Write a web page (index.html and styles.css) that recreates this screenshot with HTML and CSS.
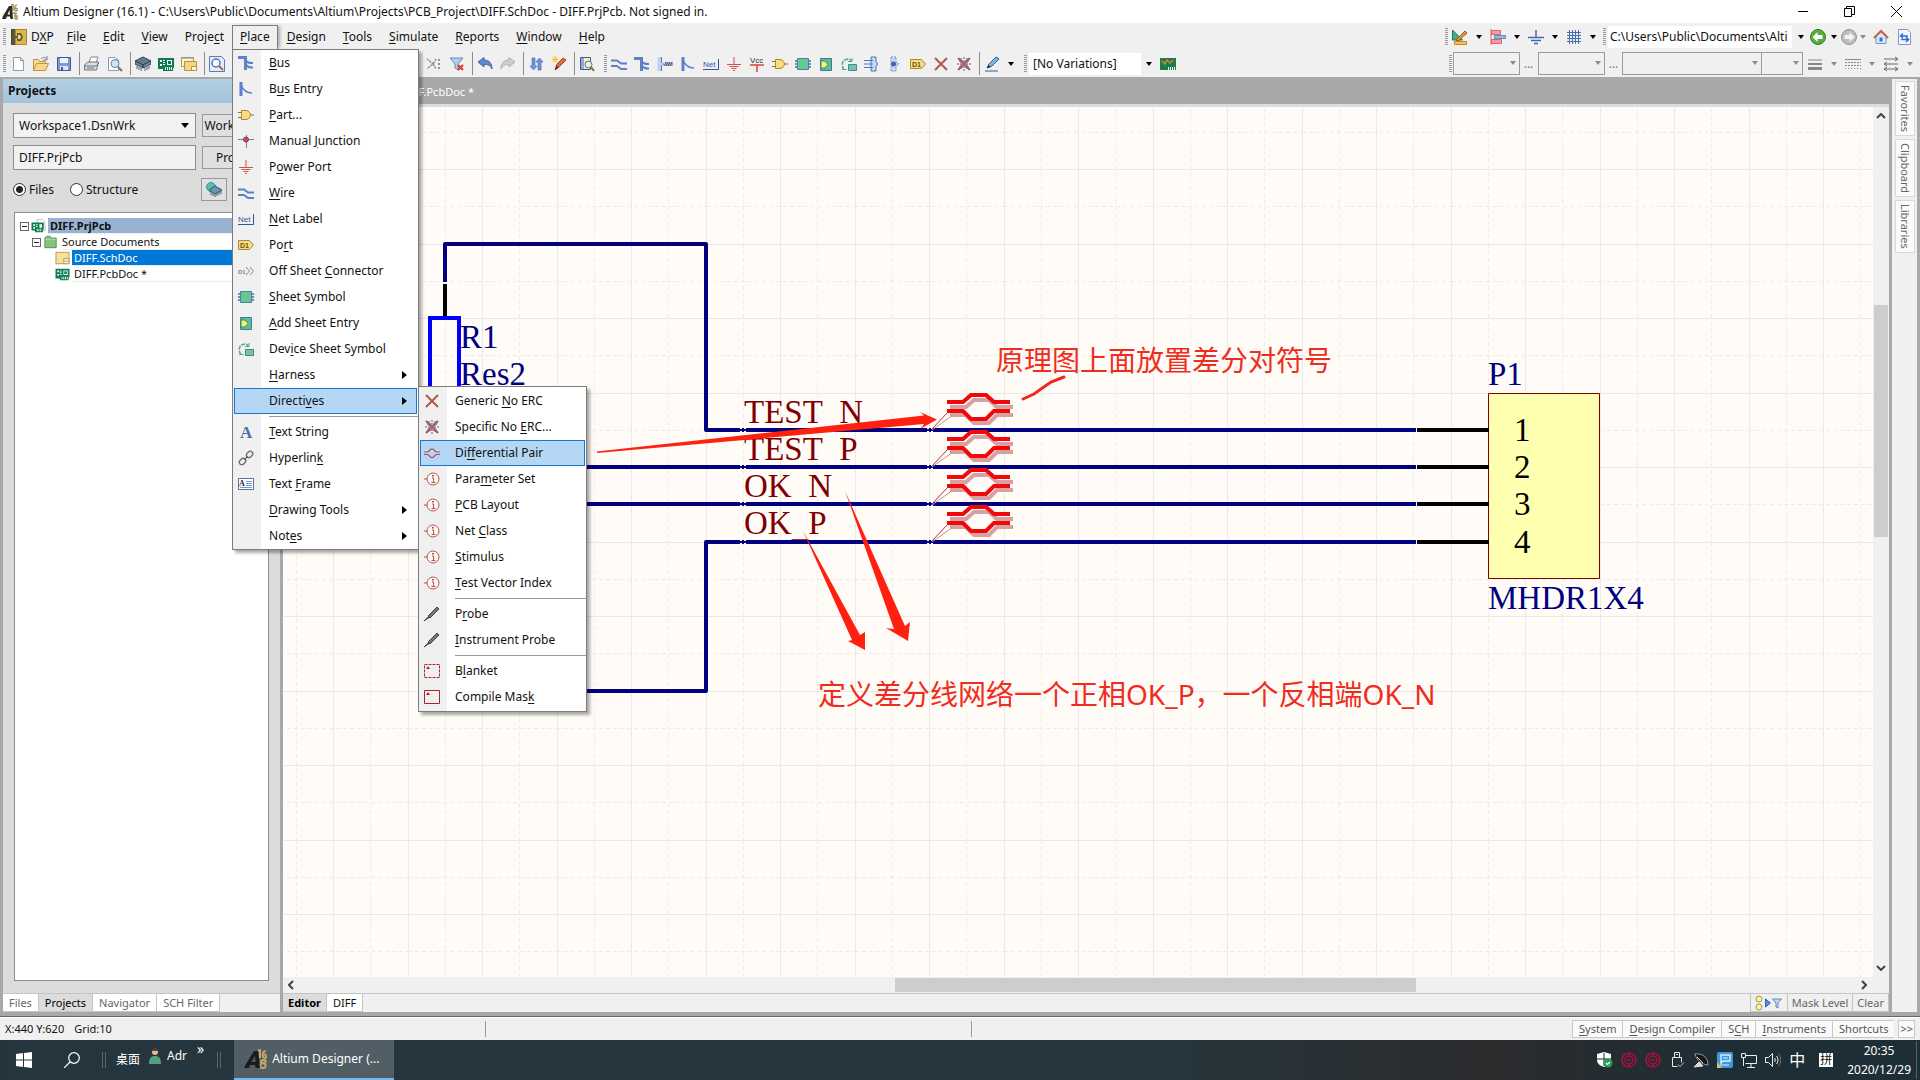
FILE: index.html
```html
<!DOCTYPE html>
<html lang="en">
<head>
<meta charset="utf-8">
<title>Altium Designer (16.1)</title>
<link rel="stylesheet" href="styles.css">
</head>
<body>

<!-- icon set -->
<svg class="defs" width="0" height="0">
	<symbol id="i-logo" viewBox="0 0 16 16"><path d="M9 1l2-1v7M15 1.500c-3-1.500-3 5.500-1 5.500s2-3-1-3M10 9h3v6M15 9.500c-3 0-2 3 0 2.500v3h-2" fill="none" stroke="#a8946a" stroke-width="1.500"/><path d="M0 15h4l.8-2.500H8L8.500 15H11L10 2H7L1 12zM7.500 6l.3 4.500H5.500z" fill="#2f2a28" fill-rule="evenodd"/></symbol>
	<symbol id="i-dxp" viewBox="0 0 16 16"><path d="M.5.5h4v15h-4z" fill="#5c5342" stroke="#4a4437"/><path d="M4.500 .5h11v15h-11z" fill="#d8b848" stroke="#a58a2f"/><path d="M6 4h4l2 4-2 4H6V9H2V7h4z" fill="#6a5a2c"/><path d="M7 6h2l1 2-1 2H7z" fill="#f0e09a"/></symbol>
	<symbol id="i-new" viewBox="0 0 16 16"><path d="M3.500 1.500h7l3 3v10h-10z" fill="#fff" stroke="#8a9bb5"/><path d="M10.500 1.500v3h3" fill="none" stroke="#8a9bb5"/></symbol>
	<symbol id="i-open" viewBox="0 0 16 16"><path d="M.5 14.500v-11h5l1 2h6v3" fill="#f7dc97" stroke="#c09348"/><path d="M.5 14.500l3-7h12l-3 7z" fill="#fbd58a" stroke="#c09348"/><path d="M8 3c2-2.500 4-2 5.500 0M14 0v4h-4" fill="none" stroke="#6d7f9c"/></symbol>
	<symbol id="i-save" viewBox="0 0 16 16"><path d="M1.500 1.500h13v13h-13z" fill="#8298d0" stroke="#43588f"/><path d="M4 2h8v5H4z" fill="#eef2fb"/><path d="M4 10h8v4H4z" fill="#dfe5f2"/><path d="M5 11h2v3H5z" fill="#43588f"/></symbol>
	<symbol id="i-print" viewBox="0 0 16 16"><path d="M5 6l2-5h7l-2 6z" fill="#fff" stroke="#7c8796"/><path d="M.5 9l3-3h11l-2 8h-12z" fill="#d8dde4" stroke="#6b7684"/><path d="M1 10h11M12 10l3-3M3 12h7" stroke="#6b7684" fill="none"/></symbol>
	<symbol id="i-preview" viewBox="0 0 16 16"><path d="M1.500 1.500h7l3 3v10h-10z" fill="#fff" stroke="#8a9bb5"/><circle cx="8" cy="7.500" r="4" fill="#cfe5f7" stroke="#6b7f99"/><path d="M11 11l4 4" stroke="#8c6b52" stroke-width="2"/></symbol>
	<symbol id="i-chip" viewBox="0 0 16 16"><path d="M8 1l8 4-8 4-8-4z" fill="#5f7c90" stroke="#33424e"/><path d="M0 5l8 4v3L0 8zM16 5l-8 4v3l8-4z" fill="#6e8da3" stroke="#33424e"/><path d="M2 10v3M4 11v3M6 12v3M10 12v3M12 11v3M14 10v3" stroke="#4c6070"/></symbol>
	<symbol id="i-globe" viewBox="0 0 16 16"><circle cx="5" cy="5" r="4.500" fill="#58bfa0" stroke="#3b8dc0"/><path d="M9 4l7 4-7 4-6-4z" fill="#6f94ad" stroke="#33566e"/><path d="M5 10v3M7 11v3M9 12v3M11 11v3M13 10v3M15 9v3" stroke="#3d5c72"/></symbol>
	<symbol id="i-pcb" viewBox="0 0 16 16"><path d="M0 2h16v10h-1v3H5v-2H0z" fill="#117a50"/><path d="M2 4h2v2H2zM2 8h2v2H2zM5 4h2v1H5zM5 6h2v1H5zM5 8h2v1H5zM9 4h5v5H9zM7 11h1v3H7zM9 11h1v3H9zM11 11h1v3h-1zM13 11h1v3h-1z" fill="#e8fff4"/><path d="M10 5h3v3h-3z" fill="#117a50"/></symbol>
	<symbol id="i-sch" viewBox="0 0 16 16"><path d="M.5 1.500h12v9H.5z" fill="#fff3c9" stroke="#b59443"/><path d="M3.500 5.500h12v9h-12z" fill="#f6d57c" stroke="#b59443"/><path d="M10.500 10.500h5v4h-5z" fill="#fff7dc" stroke="#b59443"/><path d="M.5 2h12" stroke="#7f8fb5"/></symbol>
	<symbol id="i-schdoc" viewBox="0 0 16 16"><path d="M.5 1.500h15v13H.5z" fill="#f8e0a0" stroke="#b59443"/><path d="M9.500 8.500h6v6h-6z" fill="#fff7dc" stroke="#b59443"/><path d="M10 11.500h5" stroke="#b59443"/></symbol>
	<symbol id="i-prj" viewBox="0 0 16 16"><path d="M6.500.5h6l3 3v10h-9z" fill="#fff" stroke="#a9b9c9"/><path d="M0 4h14v8h-1v3H4v-2H0z" fill="#117a50"/><path d="M2 6h2v2H2zM2 9h2v2H2zM5 6h2v1H5zM5 8h2v1H5zM9 6h3v4H9zM6 11h1v3H6zM8 11h1v3H8zM10 11h1v3h-1z" fill="#e8fff4"/></symbol>
	<symbol id="i-zoomdoc" viewBox="0 0 16 16"><path d="M.5.5h12l3 3v12H.5z" fill="#e4ecf8" stroke="#5a7bb8"/><circle cx="7" cy="7" r="4" fill="#fff" stroke="#4f76bd" stroke-width="1.500"/><path d="M10 10l4 4" stroke="#9a6b46" stroke-width="2"/></symbol>
	<symbol id="i-cross" viewBox="0 0 16 16"><path d="M1 3l6 5-6 5M10 3l-3 5 3 5" fill="none" stroke="#8b9070" stroke-dasharray="2 1" stroke-width="1.500"/><path d="M12 3h2v2h-2zM12 7h2v2h-2zM12 11h2v2h-2z" fill="#8592a8"/></symbol>
	<symbol id="i-filter" viewBox="0 0 16 16"><path d="M1 2h13l-5 6v6l-3-2V8z" fill="#b6cdf0" stroke="#6b86b8"/><path d="M9 9l5 5M14 9l-5 5" stroke="#d83a2c" stroke-width="2"/></symbol>
	<symbol id="i-undo" viewBox="0 0 16 16"><path d="M1 6l6-4.500V4c5 0 8 3 8 9-2-4-4-4.500-8-4.500V11z" fill="#5f87cf" stroke="#4266a8"/></symbol>
	<symbol id="i-redo" viewBox="0 0 16 16"><path d="M15 6L9 1.500V4C4 4 1 7 1 13c2-4 4-4.500 8-4.500V11z" fill="#c9ccd0" stroke="#aeb2b6"/></symbol>
	<symbol id="i-updown" viewBox="0 0 16 16"><path d="M4 2h3v8h2l-3.500 4L2 10h2zM10 14V6H8l3.500-4L15 6h-2v8z" fill="#6c94e0" stroke="#3d62ab" stroke-width=".6"/></symbol>
	<symbol id="i-pencil" viewBox="0 0 16 16"><path d="M4 14l2-6 6-6 3 2-7 7z" fill="#e0674a" stroke="#a2422c"/><path d="M4 14l1.500-4 2 1.500z" fill="#333"/><path d="M4 0v7M.5 3.500h7M1.500 1l5 5M6.500 1l-5 5" stroke="#f2c325"/></symbol>
	<symbol id="i-find" viewBox="0 0 16 16"><path d="M1.500 1.500h10v12h-10z" fill="#8eabdc" stroke="#43588f"/><path d="M5 2h6v11H5z" fill="#f4eecd"/><circle cx="9.500" cy="8.500" r="3.500" fill="#e2f0fb" stroke="#7c6b4a"/><path d="M12 11l3 4" stroke="#8c6b32" stroke-width="2"/></symbol>
	<symbol id="i-bus" viewBox="0 0 16 16"><path d="M0 2.500h7.500V15" fill="none" stroke="#5b82c9" stroke-width="3"/><path d="M7 4c2 4 4 4 8 4M7 8c2 4 4 4.500 8 4.500" fill="none" stroke="#5b82c9" stroke-width="2"/></symbol>
	<symbol id="i-entry" viewBox="0 0 16 16"><path d="M3 1v14" stroke="#5b82c9" stroke-width="3"/><path d="M3 4c2 5 5 8 11 8" fill="none" stroke="#5b82c9" stroke-width="1.500"/></symbol>
	<symbol id="i-wire" viewBox="0 0 16 16"><path d="M0 4.500h6l4 3h6M0 10h6l4 3h6" fill="none" stroke="#5b82c9" stroke-width="2"/></symbol>
	<symbol id="i-harness" viewBox="0 0 16 16"><path d="M2.500 1v14" stroke="#bcd2f4" stroke-width="4"/><path d="M4.500 1v5l2 2-2 2v5" fill="none" stroke="#4f76bd"/><path d="M7 10l2-4v4l2-4v4l2-4v4l2-4v4" fill="none" stroke="#4b5f90"/></symbol>
	<symbol id="i-net" viewBox="0 0 16 16"><text x="0" y="11" font-size="8" fill="#31549c">Net</text><path d="M0 13.500h15.500V3" fill="none" stroke="#31549c"/></symbol>
	<symbol id="i-power" viewBox="0 0 16 16"><path d="M8 1v8M1 8.500h14M3.500 10.500h9M5.500 12.500h5M7 14.500h2" fill="none" stroke="#d0504a"/></symbol>
	<symbol id="i-vcc" viewBox="0 0 16 16"><text x="1" y="7" font-size="8" fill="#333">Vcc</text><path d="M1 9h14M8 9v7" stroke="#d9413d" stroke-width="1.500"/></symbol>
	<symbol id="i-part" viewBox="0 0 16 16"><path d="M0 5.500h4M0 10.500h4M12 8h4" stroke="#8a7440"/><path d="M3.500 3.500H8c3 0 4.500 3 4.500 4.500S11 12.500 8 12.500H3.500z" fill="#f8dc7d" stroke="#a8893a"/></symbol>
	<symbol id="i-sheet" viewBox="0 0 16 16"><path d="M0 5h16M0 8h16M0 11h16" stroke="#6f8cc0" stroke-width="2"/><path d="M2.500 2.500h11v11h-11z" fill="#67c793" stroke="#4a7fb0"/></symbol>
	<symbol id="i-addentry" viewBox="0 0 16 16"><path d="M2.500 2.500h11v12h-11z" fill="#5bbf86" stroke="#3f78a5"/><path d="M3 5h4l3 3.500L7 12H3z" fill="#fbf07a" stroke="#3f8a68"/></symbol>
	<symbol id="i-device" viewBox="0 0 16 16"><path d="M3 13.500c-3-4-2-9 2-10 3-1 5 0 5 2" fill="none" stroke="#5aa878" stroke-width="1.500" stroke-dasharray="4 1"/><path d="M7 5.500h4V2" fill="none" stroke="#5aa878"/><path d="M7.500 8.500h8v6h-8z" fill="#6ecb95" stroke="#4a7fb0"/><path d="M1 13.500h4.500" fill="none" stroke="#5aa878"/></symbol>
	<symbol id="i-hconn" viewBox="0 0 16 16"><path d="M7 1h5v5l2 2-2 2v5H7z" fill="#c6daf8" stroke="#4f76bd"/><path d="M0 4.500h9M0 8h9M0 11.500h9" stroke="#4f76bd"/></symbol>
	<symbol id="i-hentry" viewBox="0 0 16 16"><path d="M4 1h5v5l3 2-3 2v5H4z" fill="#c6daf8" stroke="#6d8fce" stroke-dasharray="2 1"/><circle cx="6.500" cy="8" r="2.500" fill="#3c64b4"/></symbol>
	<symbol id="i-port" viewBox="0 0 16 16"><path d="M.5 3.500h11l4 4.500-4 4.500H.5z" fill="#f8dc7d" stroke="#a8893a"/><text x="2" y="11" font-size="7" font-weight="bold" fill="#6a5320">D1</text></symbol>
	<symbol id="i-off" viewBox="0 0 16 16"><text x="0" y="11" font-size="6" font-weight="bold" fill="#6f86b8">D1</text><path d="M8 4l3.500 4L8 12M12 4l3.500 4-3.500 4" fill="none" stroke="#a87f7a"/></symbol>
	<symbol id="i-junction" viewBox="0 0 16 16"><path d="M0 6.500h16M8.500 2v13" stroke="#5b82c9"/><circle cx="8" cy="6.500" r="2.500" fill="#d05050" stroke="#9c3434"/></symbol>
	<symbol id="i-noerc" viewBox="0 0 16 16"><path d="M2 2l12 12M14 2L2 14" stroke="#b5554b" stroke-width="2"/></symbol>
	<symbol id="i-spec" viewBox="0 0 16 16"><path d="M8 1v14M1 8h14M3 5h10M3 11h10M5 2v12M11 2v12" stroke="#8190cc" stroke-width="1.500" stroke-dasharray="2 1"/><path d="M2 2l12 12M14 2L2 14" stroke="#b5554b" stroke-width="2"/></symbol>
	<symbol id="i-pen" viewBox="0 0 16 16"><path d="M3 12l2-4 7-7 3 2-7 7z" fill="#7fb8e0" stroke="#2d5f8c"/><path d="M3 12l1.500-3 2 2z" fill="#222"/><path d="M1 15h13" stroke="#2d5f8c"/></symbol>
	<symbol id="i-board" viewBox="0 0 16 16"><path d="M0 2h16v12H0z" fill="#1f7a4c"/><path d="M2 5l3 3 2-4 3 3 3-3" fill="none" stroke="#d0843c" stroke-width="1.500"/><path d="M8 11h1v3H8zM10 11h1v3h-1zM12 11h1v3h-1zM14 11h1v3h-1z" fill="#e8fff4"/></symbol>
	<symbol id="i-text" viewBox="0 0 16 16"><text class="serif" x="2" y="14" font-size="17" font-weight="bold" fill="#4f6cb5">A</text></symbol>
	<symbol id="i-link" viewBox="0 0 16 16"><g fill="none" stroke="#6a6a6a" stroke-width="1.300"><rect x="8" y="2" width="7" height="5" rx="2.500" transform="rotate(-45 11.500 4.500)"/><rect x="1" y="9" width="7" height="5" rx="2.500" transform="rotate(-45 4.500 11.500)"/><path d="M6 10l4-4"/></g></symbol>
	<symbol id="i-frame" viewBox="0 0 16 16"><path d="M.5 2.500h15v11H.5z" fill="#fff" stroke="#5a6f9c"/><text class="serif" x="1" y="10" font-size="8" font-weight="bold" fill="#223">A</text><path d="M8 5.500h6M8 7.500h6M8 9.500h6M2 11.500h12" stroke="#7f9ad0"/></symbol>
	<symbol id="i-diff" viewBox="0 0 16 16"><path d="M0 7h4l3-3h2l3 3h4M0 9.500h4l3 3h2l3-3h4" fill="none" stroke="#b5455b" stroke-width="1.200"/></symbol>
	<symbol id="i-info" viewBox="0 0 16 16"><circle cx="9" cy="8" r="6" fill="#fff6f4" stroke="#b5554b"/><path d="M0 8h3M8 7h1.500v4M7.500 11.500h4" fill="none" stroke="#b5554b"/><path d="M8 4h2v1.500H8z" fill="#b5554b"/></symbol>
	<symbol id="i-probe" viewBox="0 0 16 16"><path d="M0 15l5-5 1 1z" stroke="#555"/><path d="M4 10l9-9 2 2-9 9z" fill="#777" stroke="#444"/></symbol>
	<symbol id="i-blanket" viewBox="0 0 16 16"><path d="M.5 1.500h15v13H.5z" fill="none" stroke="#a8262c" stroke-dasharray="3 1"/><path d="M2 6l2-3 2 3z" fill="#a8262c"/></symbol>
	<symbol id="i-mask" viewBox="0 0 16 16"><path d="M.5 1.500h15v13H.5z" fill="none" stroke="#a8262c"/><path d="M2 6l2-3 2 3z" fill="#a8262c"/></symbol>
	<symbol id="i-folder" viewBox="0 0 16 16"><path d="M1.500 14.500v-11l2-2h4l1 2h6v11z" fill="#86c37d" stroke="#4c8b4a"/><path d="M2 5h12" stroke="#b5dfae"/></symbol>
	<symbol id="i-ruler" viewBox="0 0 16 16"><path d="M.5 1v10h10z" fill="#3fae86" stroke="#1f7a5c"/><path d="M4 11l9-9 2 2-9 8z" fill="#e89b3a" stroke="#8f5a1c"/><path d="M2.500 12.500h12v3h-12z" fill="#f8c050" stroke="#c98a26"/></symbol>
	<symbol id="i-align" viewBox="0 0 16 16"><path d="M1.500 1.500h9v4h-9zM1.500 10.500h10v4h-10z" fill="#f59aa0" stroke="#d7666f"/><path d="M4.500 6.500h11v3h-11z" fill="#8fbdf0" stroke="#5b8dcb"/><path d="M1 0v16" stroke="#d7666f"/></symbol>
	<symbol id="i-gnd" viewBox="0 0 16 16"><path d="M8 1v8M0 8.500h16M3 11.500h10M6 14.500h4" fill="none" stroke="#3f6da8" stroke-width="1.500"/></symbol>
	<symbol id="i-grid" viewBox="0 0 16 16"><path d="M3.500 1v14M6.500 1v14M9.500 1v14M12.500 1v14M1 3.500h14M1 6.500h14M1 9.500h14M1 12.500h14" stroke="#4a6fae"/></symbol>
	<symbol id="i-back" viewBox="0 0 16 16"><circle cx="8" cy="8" r="7.500" fill="#58ad3c" stroke="#347d22"/><path d="M2.500 8l5-5v3h5v4h-5v3z" fill="#fff"/></symbol>
	<symbol id="i-fwd" viewBox="0 0 16 16"><circle cx="8" cy="8" r="7.500" fill="#bdbdbd" stroke="#929292"/><path d="M13.500 8l-5-5v3h-5v4h5v3z" fill="#f4f4f4"/></symbol>
	<symbol id="i-home" viewBox="0 0 16 16"><path d="M3 7l5-5 5 5v7.500H3z" fill="#d9e9fb" stroke="#6f94c8"/><path d="M1 9l7-7 7 7" fill="none" stroke="#c5633b" stroke-width="2"/><path d="M6.500 8.500h3v4h-3z" fill="#2f6fe0"/></symbol>
	<symbol id="i-refresh" viewBox="0 0 16 16"><path d="M2.500.5h9l3 3v12h-12z" fill="#f4f8fe" stroke="#7d98c8"/><path d="M12 7H5M7 4.500L4.500 7 7 9M5 10.500h7M10 8l2.500 2.500L10 13" fill="none" stroke="#2b6fd0" stroke-width="1.500"/></symbol>
	<symbol id="i-lines" viewBox="0 0 16 16"><path d="M1 4h14" stroke="#888"/><path d="M1 8h14" stroke="#888" stroke-width="2"/><path d="M1 12.500h14" stroke="#888" stroke-width="3"/></symbol>
	<symbol id="i-dashes" viewBox="0 0 16 16"><path d="M0 3.500h16" stroke="#888"/><path d="M0 6.500h16M0 9.500h16" stroke="#888" stroke-dasharray="2 1"/><path d="M0 12.500h16" stroke="#888" stroke-dasharray="1 2"/></symbol>
	<symbol id="i-arrows" viewBox="0 0 16 16"><path d="M1 3h13M2 8h13M1 13h14M12 1l3 2-3 2M4 6L1 8l3 2M12 11l3 2-3 2M4 11l-3 2 3 2" fill="none" stroke="#666"/></symbol>
	<symbol id="i-maskset" viewBox="0 0 28 16"><circle cx="4" cy="4" r="3" fill="#fdf6a0" stroke="#a09a3c"/><circle cx="4" cy="12" r="3" fill="#fdf6a0" stroke="#a09a3c"/><path d="M10.500 4v8l5-4z" fill="#5b8de0" stroke="#2f5fb5"/><path d="M17.500 4h9l-3.500 4v5l-2-1V8z" fill="#c4d5f2" stroke="#6b86b8"/></symbol>
	<symbol id="i-win" viewBox="0 0 16 16"><path d="M0 2l7-1v6.500H0zM8 1l8-1v7.500H8zM0 8.500h7V15l-7-1zM8 8.500h8V16l-8-1z" fill="#fff"/></symbol>
	<symbol id="i-search" viewBox="0 0 16 16"><circle cx="10" cy="6" r="5.300" fill="none" stroke="#fff" stroke-width="1.200"/><path d="M6 10l-6 6" stroke="#fff" stroke-width="1.200"/></symbol>
	<symbol id="i-person" viewBox="0 0 16 16"><circle cx="8" cy="4" r="3" fill="#e3bb94"/><path d="M5 3c0-4 6-4 6 0z" fill="#5b4030"/><path d="M2 16c0-6 2-8 6-8s6 2 6 8z" fill="#4fa27c"/></symbol>
	<symbol id="i-tasklogo" viewBox="0 0 24 20"><path d="M14 2l2-1v8M22 2.500c-4-2-4 6.500-1.500 6.500s2-4-1.500-4M20 11c-4 0-4 3-1 3s4 5 0 5-4-4 0-5 3-3 1-3" fill="none" stroke="#c0a468" stroke-width="2"/><path d="M0 19h5l1-3h5l.5 3H16L14 2h-4L2 15zM11 7l.5 6H7.500z" fill="#1d1b1a" fill-rule="evenodd"/></symbol>
	<symbol id="i-shield" viewBox="0 0 16 16"><path d="M7 0l7 2v6c0 4-4 6-7 7-3-1-7-3-7-7V2z" fill="#fff"/><path d="M7 1v13M0 7h14" stroke="#1f2d34"/><circle cx="11" cy="11" r="4.500" fill="#21a052"/><path d="M9 11l1.500 1.500L13 10" fill="none" stroke="#fff" stroke-width="1.200"/></symbol>
	<symbol id="i-red" viewBox="0 0 16 16"><circle cx="8" cy="8" r="7" fill="none" stroke="#a80f3a" stroke-width="1.600"/><circle cx="8" cy="8" r="4" fill="none" stroke="#a80f3a" stroke-width="1.500"/><path d="M6 8h4M8 1v3M8 12v3" stroke="#a80f3a" stroke-width="1.500"/></symbol>
	<symbol id="i-usb" viewBox="0 0 16 16"><path d="M5.500 5V.5h5V5M3.500 5.500h9v5M3.500 5.500v9h5" fill="none" stroke="#e8e8e8"/><path d="M7 2.500h2" stroke="#e8e8e8"/><path d="M9 12.500l2 2 4-4" fill="none" stroke="#c0c4c8"/></symbol>
	<symbol id="i-dish" viewBox="0 0 16 16"><path d="M2 2c2 7 6 10 13 11C15 5 9 1 2 2z" fill="#161616" stroke="#ccc" stroke-width=".7"/><path d="M4 5l6 6M1 15l5-5 4 4z" fill="#ddd" stroke="#ddd"/></symbol>
	<symbol id="i-blue" viewBox="0 0 16 16"><rect width="16" height="16" rx="2" fill="#3f97dc"/><path d="M4 3h9v6H6l-2 2z" fill="none" stroke="#d8f0ff" stroke-width="1.400"/><path d="M6 6h5M3 13h9" stroke="#d8f0ff"/><path d="M0 10v6h5z" fill="#e8c05c"/></symbol>
	<symbol id="i-monitor" viewBox="0 0 16 16"><path d="M4.500 3.500h11v8h-11M10 12v3M6 15.500h8M.5 1.500h4v4h-4zM2.500 6v8" fill="none" stroke="#eee"/></symbol>
	<symbol id="i-speaker" viewBox="0 0 16 16"><path d="M.5 5.500h3l4-4v13l-4-4h-3z" fill="none" stroke="#eee"/><path d="M9.500 6c1 1 1 3 0 4M11.500 4c2 2 2 6 0 8" fill="none" stroke="#eee"/><path d="M13.500 2c3 3 3 9 0 12" fill="none" stroke="#777"/></symbol>
</svg>

<header class="titlebar">
	<svg class="icon"><use href="#i-logo"/></svg>
	<span class="caption">Altium Designer (16.1) - C:\Users\Public\Documents\Altium\Projects\PCB_Project\DIFF.SchDoc - DIFF.PrjPcb. Not signed in.</span>
	<button class="winbtn" aria-label="Minimize"><svg width="11" height="11"><path d="M0 5.500h10" stroke="#000"/></svg></button>
	<button class="winbtn" aria-label="Restore"><svg width="11" height="11"><path d="M.5 2.500h7v8h-7zM2.500 2V.5h8v8H8" fill="none" stroke="#000"/></svg></button>
	<button class="winbtn" aria-label="Close"><svg width="11" height="11"><path d="M0 0l11 11M11 0L0 11" stroke="#000"/></svg></button>
</header>

<nav class="menubar">
	<span class="grip"></span>
	<button class="menu dxp"><svg class="icon"><use href="#i-dxp"/></svg><span>D<u>X</u>P</span></button>
	<button class="menu"><u>F</u>ile</button>
	<button class="menu"><u>E</u>dit</button>
	<button class="menu"><u>V</u>iew</button>
	<button class="menu">Proje<u>c</u>t</button>
	<div class="menu-wrap">
		<button class="menu open"><u>P</u>lace</button>
		<div class="dropdown place">
			<button class="item"><svg class="icon"><use href="#i-bus"/></svg><span><u>B</u>us</span></button>
			<button class="item"><svg class="icon"><use href="#i-entry"/></svg><span>B<u>u</u>s Entry</span></button>
			<button class="item"><svg class="icon"><use href="#i-part"/></svg><span><u>P</u>art...</span></button>
			<button class="item"><svg class="icon"><use href="#i-junction"/></svg><span>Manual <u>J</u>unction</span></button>
			<button class="item"><svg class="icon"><use href="#i-power"/></svg><span>P<u>o</u>wer Port</span></button>
			<button class="item"><svg class="icon"><use href="#i-wire"/></svg><span><u>W</u>ire</span></button>
			<button class="item"><svg class="icon"><use href="#i-net"/></svg><span><u>N</u>et Label</span></button>
			<button class="item"><svg class="icon"><use href="#i-port"/></svg><span>Po<u>r</u>t</span></button>
			<button class="item"><svg class="icon"><use href="#i-off"/></svg><span>Off Sheet <u>C</u>onnector</span></button>
			<button class="item"><svg class="icon"><use href="#i-sheet"/></svg><span><u>S</u>heet Symbol</span></button>
			<button class="item"><svg class="icon"><use href="#i-addentry"/></svg><span><u>A</u>dd Sheet Entry</span></button>
			<button class="item"><svg class="icon"><use href="#i-device"/></svg><span>Dev<u>i</u>ce Sheet Symbol</span></button>
			<button class="item more"><span class="icon"></span><span><u>H</u>arness</span></button>
			<div class="sub-wrap">
				<button class="item more active"><span class="icon"></span><span>Directi<u>v</u>es</span></button>
				<div class="dropdown sub">
					<button class="item"><svg class="icon"><use href="#i-noerc"/></svg><span>Generic <u>N</u>o ERC</span></button>
					<button class="item"><svg class="icon"><use href="#i-spec"/></svg><span>Specific No <u>E</u>RC...</span></button>
					<button class="item active"><svg class="icon"><use href="#i-diff"/></svg><span>Di<u>f</u>ferential Pair</span></button>
					<button class="item"><svg class="icon"><use href="#i-info"/></svg><span>Para<u>m</u>eter Set</span></button>
					<button class="item"><svg class="icon"><use href="#i-info"/></svg><span><u>P</u>CB Layout</span></button>
					<button class="item"><svg class="icon"><use href="#i-info"/></svg><span>Net <u>C</u>lass</span></button>
					<button class="item"><svg class="icon"><use href="#i-info"/></svg><span><u>S</u>timulus</span></button>
					<button class="item"><svg class="icon"><use href="#i-info"/></svg><span><u>T</u>est Vector Index</span></button>
					<hr>
					<button class="item"><svg class="icon"><use href="#i-probe"/></svg><span>P<u>r</u>obe</span></button>
					<button class="item"><svg class="icon"><use href="#i-probe"/></svg><span><u>I</u>nstrument Probe</span></button>
					<hr>
					<button class="item"><svg class="icon"><use href="#i-blanket"/></svg><span>B<u>l</u>anket</span></button>
					<button class="item"><svg class="icon"><use href="#i-mask"/></svg><span>Compile Mas<u>k</u></span></button>
				</div>
			</div>
			<hr>
			<button class="item"><svg class="icon"><use href="#i-text"/></svg><span><u>T</u>ext String</span></button>
			<button class="item"><svg class="icon"><use href="#i-link"/></svg><span>Hyperlin<u>k</u></span></button>
			<button class="item"><svg class="icon"><use href="#i-frame"/></svg><span>Text <u>F</u>rame</span></button>
			<button class="item more"><span class="icon"></span><span><u>D</u>rawing Tools</span></button>
			<button class="item more"><span class="icon"></span><span>Not<u>e</u>s</span></button>
		</div>
	</div>
	<button class="menu"><u>D</u>esign</button>
	<button class="menu"><u>T</u>ools</button>
	<button class="menu"><u>S</u>imulate</button>
	<button class="menu"><u>R</u>eports</button>
	<button class="menu"><u>W</u>indow</button>
	<button class="menu"><u>H</u>elp</button>
	<div class="right">
		<span class="grip"></span>
		<button class="tool" aria-label="Utilities"><svg class="icon"><use href="#i-ruler"/></svg></button><button class="arr" aria-label="More"></button>
		<button class="tool" aria-label="Align"><svg class="icon"><use href="#i-align"/></svg></button><button class="arr" aria-label="More"></button>
		<button class="tool" aria-label="Power"><svg class="icon"><use href="#i-gnd"/></svg></button><button class="arr" aria-label="More"></button>
		<button class="tool" aria-label="Grid"><svg class="icon"><use href="#i-grid"/></svg></button><button class="arr" aria-label="More"></button>
		<span class="grip"></span>
		<input class="path" aria-label="Path" value="C:\Users\Public\Documents\Alti"><button class="arr" aria-label="More"></button>
		<button class="nav" aria-label="Back"><svg class="icon"><use href="#i-back"/></svg></button><button class="arr" aria-label="More"></button>
		<button class="nav" aria-label="Forward"><svg class="icon"><use href="#i-fwd"/></svg></button><button class="arr off" aria-label="More"></button>
		<button class="tool" aria-label="Home"><svg class="icon"><use href="#i-home"/></svg></button>
		<button class="tool" aria-label="Refresh"><svg class="icon"><use href="#i-refresh"/></svg></button>
	</div>
</nav>

<div class="toolbar">
	<span class="grip"></span>
	<button class="tool" aria-label="New"><svg class="icon"><use href="#i-new"/></svg></button>
	<button class="tool" aria-label="Open"><svg class="icon"><use href="#i-open"/></svg></button>
	<button class="tool" aria-label="Save"><svg class="icon"><use href="#i-save"/></svg></button>
	<span class="sep"></span>
	<button class="tool" aria-label="Print"><svg class="icon"><use href="#i-print"/></svg></button>
	<button class="tool" aria-label="Preview"><svg class="icon"><use href="#i-preview"/></svg></button>
	<span class="sep"></span>
	<button class="tool" aria-label="Devices"><svg class="icon"><use href="#i-chip"/></svg></button>
	<button class="tool" aria-label="PCB"><svg class="icon"><use href="#i-pcb"/></svg></button>
	<button class="tool" aria-label="Schematic"><svg class="icon"><use href="#i-sch"/></svg></button>
	<span class="sep"></span>
	<button class="tool" aria-label="Zoom"><svg class="icon"><use href="#i-zoomdoc"/></svg></button>
	<div class="group-edit">
		<button class="tool" aria-label="Deselect"><svg class="icon"><use href="#i-cross"/></svg></button>
		<button class="tool" aria-label="Clear filter"><svg class="icon"><use href="#i-filter"/></svg></button>
		<span class="sep"></span>
		<button class="tool" aria-label="Undo"><svg class="icon"><use href="#i-undo"/></svg></button>
		<button class="tool" aria-label="Redo"><svg class="icon"><use href="#i-redo"/></svg></button>
		<span class="sep"></span>
		<button class="tool" aria-label="Hierarchy"><svg class="icon"><use href="#i-updown"/></svg></button>
		<button class="tool" aria-label="Cross probe"><svg class="icon"><use href="#i-pencil"/></svg></button>
		<span class="sep"></span>
		<button class="tool" aria-label="Browse"><svg class="icon"><use href="#i-find"/></svg></button>
	</div>
	<span class="grip wide"></span>
	<button class="tool" aria-label="Wire"><svg class="icon"><use href="#i-wire"/></svg></button>
	<button class="tool" aria-label="Bus"><svg class="icon"><use href="#i-bus"/></svg></button>
	<button class="tool" aria-label="Harness"><svg class="icon"><use href="#i-harness"/></svg></button>
	<button class="tool" aria-label="Bus entry"><svg class="icon"><use href="#i-entry"/></svg></button>
	<button class="tool" aria-label="Net label"><svg class="icon"><use href="#i-net"/></svg></button>
	<button class="tool" aria-label="GND"><svg class="icon"><use href="#i-power"/></svg></button>
	<button class="tool" aria-label="VCC"><svg class="icon"><use href="#i-vcc"/></svg></button>
	<button class="tool" aria-label="Part"><svg class="icon"><use href="#i-part"/></svg></button>
	<button class="tool" aria-label="Sheet symbol"><svg class="icon"><use href="#i-sheet"/></svg></button>
	<button class="tool" aria-label="Sheet entry"><svg class="icon"><use href="#i-addentry"/></svg></button>
	<button class="tool" aria-label="Device sheet"><svg class="icon"><use href="#i-device"/></svg></button>
	<button class="tool" aria-label="Harness connector"><svg class="icon"><use href="#i-hconn"/></svg></button>
	<button class="tool" aria-label="Harness entry"><svg class="icon"><use href="#i-hentry"/></svg></button>
	<button class="tool" aria-label="Port"><svg class="icon"><use href="#i-port"/></svg></button>
	<button class="tool" aria-label="No ERC"><svg class="icon"><use href="#i-noerc"/></svg></button>
	<button class="tool" aria-label="Specific no ERC"><svg class="icon"><use href="#i-spec"/></svg></button>
	<span class="sep"></span>
	<button class="tool" aria-label="Highlight"><svg class="icon"><use href="#i-pen"/></svg></button><button class="arr" aria-label="More"></button>
	<span class="grip wide"></span>
	<input class="variation" aria-label="Variation" value="[No Variations]"><button class="arr" aria-label="More"></button>
	<button class="tool" aria-label="Variants"><svg class="icon"><use href="#i-board"/></svg></button>
	<div class="right format">
		<span class="grip"></span>
		<div class="combo short"><select disabled aria-label="Colour"></select></div><span class="dots">...</span>
		<div class="combo short"><select disabled aria-label="Fill"></select></div><span class="dots">...</span>
		<div class="combo long"><select disabled aria-label="Font"></select></div>
		<div class="combo size"><select disabled aria-label="Size"></select></div>
		<button class="tool" aria-label="Line width"><svg class="icon"><use href="#i-lines"/></svg></button><button class="arr off" aria-label="More"></button>
		<button class="tool" aria-label="Line style"><svg class="icon"><use href="#i-dashes"/></svg></button><button class="arr off" aria-label="More"></button>
		<button class="tool" aria-label="Arrow style"><svg class="icon"><use href="#i-arrows"/></svg></button><button class="arr off" aria-label="More"></button>
	</div>
</div>

<main class="workspace">
	<aside class="panel">
		<h2>Projects</h2>
		<div class="panel-body">
			<div class="row">
				<div class="combo ws"><select aria-label="Workspace"><option>Workspace1.DsnWrk</option></select></div>
				<button class="push">Workspace</button>
			</div>
			<div class="row">
				<input class="field" aria-label="Project" value="DIFF.PrjPcb">
				<button class="push">Project</button>
			</div>
			<div class="row radios">
				<label><input type="radio" name="mode" checked>Files</label>
				<label><input type="radio" name="mode">Structure</label>
				<button class="push small" aria-label="Open project"><svg class="icon"><use href="#i-globe"/></svg></button>
			</div>
			<ul class="tree">
				<li class="lv1 root"><button class="exp" aria-label="Collapse"></button><svg class="icon"><use href="#i-prj"/></svg><span>DIFF.PrjPcb</span></li>
				<li class="lv2"><button class="exp" aria-label="Collapse"></button><svg class="icon"><use href="#i-folder"/></svg><span>Source Documents</span></li>
				<li class="lv3 selected"><svg class="icon"><use href="#i-schdoc"/></svg><span>DIFF.SchDoc</span></li>
				<li class="lv3"><svg class="icon"><use href="#i-pcb"/></svg><span>DIFF.PcbDoc *</span></li>
			</ul>
		</div>
		<div class="tabs">
			<button>Files</button><button class="current">Projects</button><button>Navigator</button><button>SCH Filter</button>
		</div>
	</aside>

	<section class="editor">
		<div class="doctabs"><span>DIFF.PcbDoc *</span></div>
		<div class="view">
			<svg class="sheet" viewBox="283 107 1590 870" preserveAspectRatio="xMinYMin slice">
				<defs>
					<pattern id="grid" x="1302" y="244" width="149" height="149" patternUnits="userSpaceOnUse">
						<path d="M0 .5h149M0 74.500h149M.5 0v149M74.500 0v149" stroke="#ebe9e5"/>
						<path d="M0 37.500h149M0 111.500h149M37.500 0v149M111.500 0v149" stroke="#eeece8" stroke-dasharray="4 3"/>
					</pattern>
					<g id="pair">
						<path d="M950 407h16l8-7h15l8 7h16M950 415h16l8 8h15l8-8h16" stroke="#d8a0a2"/>
						<path d="M947 402h16l8-7h15l8 7h16M947 411h16l8 8h15l8-8h16" stroke="#f20808"/>
						<path d="M948 412l-16 17" stroke="#b03038" stroke-width="1"/>
						<path d="M953 415l-21 15" stroke="#c89090" stroke-width="1"/>
					</g>
				</defs>
				<rect x="283" y="107" width="100%" height="100%" fill="#fffcf7"/>
				<rect x="283" y="107" width="100%" height="100%" fill="url(#grid)"/>

				<!-- net labels, the underscore sits on the wire -->
				<g class="netname">
					<text x="744" y="423">TEST<tspan dy="3">_</tspan><tspan dy="-3">N</tspan></text>
					<text x="744" y="460">TEST<tspan dy="3">_</tspan><tspan dy="-3">P</tspan></text>
					<text x="744" y="497">OK<tspan dy="3">_</tspan><tspan dy="-3">N</tspan></text>
					<text x="744" y="534">OK<tspan dy="3">_</tspan><tspan dy="-3">P</tspan></text>
				</g>

				<!-- wires -->
				<g fill="none" stroke="#000080" stroke-width="4" stroke-linejoin="round">
					<path d="M445 282v-38h261v186h710"/>
					<path d="M560 467h856M560 504h856"/>
					<path d="M560 691h146V542h710"/>
				</g>
				<g stroke="#000" stroke-width="4">
					<path d="M445 284v32M1417 430h72M1417 467h72M1417 504h72M1417 542h72"/>
				</g>
				<g stroke="#fffcf7" stroke-dasharray="2 2">
					<path d="M740 428.500h7M740 431.500h7M740 465.500h7M740 468.500h7M740 502.500h7M740 505.500h7M740 540.500h7M740 543.500h7"/>
					<path d="M927 428.500h7M927 431.500h7M927 465.500h7M927 468.500h7M927 502.500h7M927 505.500h7M927 540.500h7M927 543.500h7"/>
				</g>

				<!-- resistor -->
				<path d="M430 318h29v110h-29z" fill="none" stroke="#0000ff" stroke-width="4"/>
				<g class="designator">
					<text x="460" y="348">R1</text>
					<text x="460" y="385">Res2</text>
				</g>

				<!-- header -->
				<path d="M1488.500 393.500h111v185h-111z" fill="#ffffb0" stroke="#800000"/>
				<path d="M1485 430h4M1485 467h4M1485 504h4M1485 542h4" stroke="#000" stroke-width="4"/>
				<g class="designator">
					<text x="1488" y="385">P1</text>
					<text x="1488" y="609">MHDR1X4</text>
				</g>
				<g class="pin">
					<text x="1514" y="441">1</text>
					<text x="1514" y="478">2</text>
					<text x="1514" y="515">3</text>
					<text x="1514" y="553">4</text>
				</g>

				<g fill="none" stroke-width="4">
					<use href="#pair"/>
					<use href="#pair" y="37"/>
					<use href="#pair" y="75"/>
					<use href="#pair" y="112"/>
				</g>

				<!-- red notes -->
				<g fill="#ff2010">
					<path d="M597 451.500L924 415.500l-4-3.500 17 7.500-16 9 3-4.500L597 453z"/>
					<path d="M845 491l49 138-1 0-7-1 22 13 2-19-5 4z"/>
					<path d="M803 531l49 109-4 1 17 9v-18l-5 3z"/>
				</g>
				<path d="M1023 399l11-5 7-5 10-7 13-5" fill="none" stroke="#f0281c" stroke-width="3" stroke-linecap="round"/>
				<g class="note">
					<text x="996" y="371">原理图上面放置差分对符号</text>
					<text x="818" y="705">定义差分线网络一个正相OK_P，一个反相端OK_N</text>
				</g>
			</svg>
			<div class="vscroll">
				<svg width="10" height="6"><path d="M1 5l4-4 4 4" fill="none" stroke="#444" stroke-width="2"/></svg>
				<span class="thumb"></span>
				<svg width="10" height="6"><path d="M1 1l4 4 4-4" fill="none" stroke="#444" stroke-width="2"/></svg>
			</div>
		</div>
		<div class="hscroll">
			<svg width="6" height="10"><path d="M5 1L1 5l4 4" fill="none" stroke="#444" stroke-width="2"/></svg>
			<span class="thumb"></span>
			<svg width="6" height="10"><path d="M1 1l4 4-4 4" fill="none" stroke="#444" stroke-width="2"/></svg>
		</div>
		<div class="tabs">
			<button class="current bold">Editor</button><button class="dark">DIFF</button>
			<div class="mask">
				<button aria-label="Mask"><svg width="28" height="16"><use href="#i-maskset"/></svg></button><button>Mask Level</button><button>Clear</button>
			</div>
		</div>
	</section>

	<aside class="sidetabs">
		<button>Favorites</button>
		<button>Clipboard</button>
		<button>Libraries</button>
	</aside>
</main>

<footer class="statusbar">
	<span class="coords">X:440 Y:620</span><span class="gridsize">Grid:10</span>
	<span class="cell"></span>
	<div class="panels">
		<button><u>S</u>ystem</button><button><u>D</u>esign Compiler</button><button>S<u>C</u>H</button><button><u>I</u>nstruments</button><button>Shortcuts</button><button class="last">&gt;&gt;</button>
	</div>
</footer>

<div class="taskbar">
	<button class="start" aria-label="Start"><svg class="icon"><use href="#i-win"/></svg></button>
	<button class="start" aria-label="Search"><svg class="icon"><use href="#i-search"/></svg></button>
	<span class="bars"></span>
	<span class="desk">桌面</span>
	<a class="user" href="#"><svg class="icon"><use href="#i-person"/></svg>Adr</a>
	<span class="chev">»</span>
	<span class="bars"></span>
	<button class="task"><svg class="icon"><use href="#i-tasklogo"/></svg>Altium Designer (...</button>
	<div class="tray">
		<svg class="icon"><use href="#i-shield"/></svg>
		<svg class="icon"><use href="#i-red"/></svg>
		<svg class="icon"><use href="#i-red"/></svg>
		<svg class="icon"><use href="#i-usb"/></svg>
		<svg class="icon"><use href="#i-dish"/></svg>
		<svg class="icon"><use href="#i-blue"/></svg>
		<svg class="icon"><use href="#i-monitor"/></svg>
		<svg class="icon"><use href="#i-speaker"/></svg>
		<span class="ime">中</span>
		<span class="pin-ime">拼</span>
		<div class="clock"><span>20:35</span><span>2020/12/29</span></div>
	</div>
</div>

</body>
</html>
```

FILE: styles.css
```css
* {
	box-sizing: border-box;
}
body {
	margin: 0;
	height: 100vh;
	display: flex;
	flex-direction: column;
	overflow: hidden;
	background: #f0f0f0;
	color: #111;
	font: 12px/16px "Noto Sans", "Noto Sans CJK SC", sans-serif;
}
button, input, select {
	font: inherit;
	color: inherit;
	margin: 0;
	padding: 0;
	border: 0;
	border-radius: 0;
	background: none;
	white-space: nowrap;
}
u {
	text-underline-offset: 2px;
}
.defs {
	display: none;
}
.defs text {
	font-family: "Liberation Sans", sans-serif;
}
.defs .serif {
	font-family: "Liberation Serif", serif;
}
.icon {
	width: 16px;
	height: 16px;
	flex: none;
}

/* title bar */
.titlebar {
	height: 23px;
	flex: none;
	display: flex;
	align-items: center;
	background: #fff;
	padding-left: 2px;
}
.caption {
	flex: 1;
	margin-left: 5px;
}
.winbtn {
	width: 46px;
	height: 22px;
	display: flex;
	align-items: center;
	justify-content: center;
}
.winbtn:last-child {
	width: 48px;
}

/* menus */
.menubar {
	height: 27px;
	flex: none;
	display: flex;
	align-items: center;
	position: relative;
	z-index: 5;
}
.menu {
	height: 24px;
	padding: 0 8px 0 9px;
}
.menu.dxp {
	display: flex;
	align-items: center;
	gap: 4px;
	padding: 0 4px 0 5px;
}
.menu-wrap {
	position: relative;
}
.menu.open {
	display: block;
	padding: 0 7px;
	border: 1px solid #7c7c7c;
	border-bottom: 0;
	box-shadow: 3px 0 3px -1px #aaa;
}
.dropdown {
	position: absolute;
	background: linear-gradient(90deg, #f0f0f0 28px, #fff 28px);
	border: 1px solid #7c7c7c;
	box-shadow: 3px 3px 3px #0005;
	display: flex;
	flex-direction: column;
}
.dropdown.place {
	left: 0;
	top: 24px;
	width: 187px;
}
.dropdown.sub {
	left: 185px;
	top: -2px;
	width: 169px;
	padding: 1px 0;
	z-index: 2;
}
.sub-wrap {
	position: relative;
	display: flex;
	flex-direction: column;
}
.item {
	height: 26px;
	margin: 0 1px;
	padding: 0 9px 0 3px;
	border: 1px solid transparent;
	display: flex;
	align-items: center;
	gap: 15px;
	text-align: left;
}
.item.active {
	background: #b3d7f4;
	border-color: #1a78cc;
}
.item.more::after {
	content: "";
	margin-left: auto;
	border: 4px solid transparent;
	border-left: 5px solid #000;
	border-right: 0;
}
.dropdown hr {
	width: auto;
	height: 1px;
	margin: 2px 0 2px 36px;
	border: 0;
	background: #9a9a9a;
}

/* toolbars */
.toolbar {
	height: 27px;
	flex: none;
	display: flex;
	align-items: center;
}
.grip {
	width: 3px;
	height: 18px;
	margin-left: 3px;
	flex: none;
	background: repeating-linear-gradient(#9a9a9a 0 1px, #f0f0f0 1px 2px);
}
.grip.wide {
	margin-left: 6px;
}
.tool {
	width: 23px;
	height: 22px;
	display: flex;
	align-items: center;
	justify-content: center;
}
.nav {
	width: 16px;
	height: 22px;
	display: flex;
	align-items: center;
}
.sep {
	width: 5px;
	height: 23px;
	border-right: 1px solid #8c8c8c;
}
.arr {
	width: 15px;
	height: 22px;
	display: flex;
	align-items: center;
	justify-content: center;
}
.arr::before {
	content: "";
	border: 3px solid transparent;
	border-top: 4px solid #000;
	border-bottom: 0;
}
.arr.off::before {
	border-top-color: #8c8c8c;
}
.group-edit {
	display: flex;
	align-items: center;
	margin-left: 194px;
}
.variation {
	width: 112px;
	height: 22px;
	background: #fff;
	padding-left: 4px;
	margin-left: 2px;
}
.right {
	margin-left: auto;
	padding-right: 5px;
	display: flex;
	align-items: center;
}
.path {
	width: 184px;
	height: 22px;
	background: #fff;
	padding: 0 2px;
	margin-left: 2px;
}
.path + .arr {
	width: 18px;
}
.menubar .arr.off {
	width: 12px;
}
.combo {
	position: relative;
}
.combo select {
	appearance: none;
	width: 100%;
	height: 100%;
	border: 1px solid #9a9a9a;
	opacity: 1;
}
.combo::after {
	content: "";
	position: absolute;
	right: 4px;
	top: 9px;
	border: 3px solid transparent;
	border-top: 4px solid #8c8c8c;
	border-bottom: 0;
}
.format .combo {
	height: 23px;
}
.format {
	padding-right: 3px;
}
.short {
	width: 67px;
	margin-left: 1px;
}
.long {
	width: 140px;
}
.size {
	width: 42px;
	margin-left: -1px;
}
.dots {
	width: 17px;
	text-align: center;
	color: #777;
}

/* work area */
.workspace {
	flex: 1;
	min-height: 0;
	display: flex;
	gap: 3px;
	padding: 2px 3px 4px;
	background: #a8a8a8;
	border-bottom: 1px solid #666;
}
.panel {
	width: 277px;
	display: flex;
	flex-direction: column;
	background: #dcdcdc;
}
.panel h2 {
	margin: 0;
	height: 24px;
	padding: 0 5px;
	font-size: 12px;
	line-height: 23px;
	background: linear-gradient(#b4d0e2, #a3c3dc);
}
.panel-body {
	flex: 1;
	display: flex;
	flex-direction: column;
	padding: 10px 11px 12px 10px;
	gap: 7px;
}
.row {
	display: flex;
	align-items: center;
	gap: 6px;
	height: 25px;
	flex: none;
}
.ws, .field {
	width: 183px;
	height: 25px;
	background: #f2f2f2;
}
.ws select, .field {
	padding: 0 5px;
	border: 1px solid #8c8c8c;
}
.combo.ws::after {
	right: 7px;
	top: 10px;
	border-width: 5px 4px 0;
	border-top-color: #000;
}
.push {
	flex: 1;
	height: 23px;
	border: 1px solid #9a9a9a;
	background: #e0e0e0;
}
.push.small {
	flex: none;
	width: 26px;
	margin-left: auto;
	margin-right: 42px;
}
.push .icon {
	display: block;
	margin: auto;
}
.radios label {
	display: flex;
	align-items: center;
	gap: 3px;
	margin-right: 10px;
}
.radios input {
	appearance: none;
	width: 13px;
	height: 13px;
	border: 1px solid #333;
	border-radius: 50%;
	background: #fff;
}
.radios input:checked {
	background: radial-gradient(#222 3px, #fff 4px);
}
.tree {
	flex: 1;
	list-style: none;
	margin: 3px 0 0 1px;
	padding: 5px 0 0 5px;
	background: #fff;
	border: 1px solid #8c8c8c;
	font-size: 11px;
}
.tree li {
	height: 16px;
	display: flex;
	align-items: center;
	gap: 2px;
}
.tree span {
	flex: 1;
	padding-left: 2px;
	border-bottom: 1px solid #eee;
	line-height: 15px;
}
.tree .icon {
	width: 15px;
	height: 14px;
}
.lv2 {
	padding-left: 12px;
}
.lv3 {
	padding-left: 35px;
}
.root span {
	background: #99b2d1;
	font-weight: bold;
}
.tree .selected span {
	background: #0078d7;
	color: #fff;
}
.exp {
	width: 9px;
	height: 9px;
	border: 1px solid #666;
	background: linear-gradient(#222, #222) center / 5px 1px no-repeat #fff;
}
.tabs {
	height: 19px;
	flex: none;
	display: flex;
	align-items: flex-start;
	background: #f0f0f0;
	border-top: 1px solid #c4c4c4;
	font-size: 11px;
}
.tabs button {
	height: 18px;
	padding: 0 6px;
	background: #fff;
	color: #666;
	border: 1px solid #c4c4c4;
	border-width: 0 1px 1px 0;
}
.tabs .current {
	background: #dcdcdc;
	color: #000;
}
.tabs .bold {
	padding: 0 5px;
	font-weight: bold;
}
.tabs .dark {
	color: #111;
}
.editor {
	flex: 1;
	min-width: 0;
	display: flex;
	flex-direction: column;
}
.doctabs {
	height: 28px;
	flex: none;
	padding-left: 118px;
	line-height: 26px;
	font-size: 11px;
	color: #fff;
	border-bottom: 3px solid #dcdcdc;
}
.view {
	flex: 1;
	min-height: 0;
	display: flex;
}
.sheet {
	flex: 1;
	min-width: 0;
	height: 100%;
	background: #fffcf7;
}
.sheet text {
	font: 33px "Liberation Serif", serif;
}
.netname {
	fill: #800000;
}
.designator {
	fill: #000080;
}
.sheet .note text {
	font: 28px "Noto Sans", "Noto Sans CJK SC", sans-serif;
	fill: #f02c20;
}
.vscroll {
	width: 16px;
	display: flex;
	flex-direction: column;
	align-items: center;
	padding: 6px 0;
	background: #f0f0f0;
}
.vscroll .thumb {
	width: 14px;
	height: 27%;
	margin: 186px 0 auto;
	background: #cdcdcd;
}
.hscroll {
	height: 16px;
	flex: none;
	display: flex;
	align-items: center;
	padding: 0 22px 0 5px;
	background: #f0f0f0;
}
.hscroll .thumb {
	width: 33%;
	height: 14px;
	margin: 0 auto 0 601px;
	background: #cdcdcd;
}
.mask {
	margin-left: auto;
	display: flex;
}
.mask button {
	background: #f0f0f0;
	padding: 0 4px;
	border-left-width: 1px;
	margin-left: -1px;
}
.mask svg {
	display: block;
}
.sidetabs {
	width: 25px;
	background: #f0f0f0;
	display: flex;
	flex-direction: column;
	align-items: center;
	gap: 3px;
	padding-top: 2px;
}
.sidetabs button {
	writing-mode: vertical-rl;
	width: 20px;
	padding: 3px 0;
	border: 1px solid #d8d8d8;
	background: #fafafa;
	color: #666;
	font-size: 11px;
}

/* status bar */
.statusbar {
	height: 23px;
	flex: none;
	display: flex;
	align-items: center;
	border-top: 1px solid #fff;
	padding-left: 5px;
	font-size: 11px;
}
.gridsize {
	margin-left: 10px;
	flex: 0 0 412px;
	border-right: 1px solid #999;
}
.cell {
	flex: 0 0 486px;
	height: 16px;
	border-right: 1px solid #999;
}
.panels {
	margin-left: auto;
	display: flex;
	padding-right: 5px;
}
.panels button {
	height: 18px;
	padding: 0 6px;
	border: 1px solid #c8c8c8;
	border-right-width: 0;
	background: #fafafa;
	color: #555;
}
.panels .last {
	margin-left: 4px;
	padding: 0 1px;
	border-right-width: 1px;
}

/* windows taskbar */
.taskbar {
	height: 40px;
	flex: none;
	display: flex;
	align-items: center;
	background: linear-gradient(90deg, #24353d, #26363d 60%, #2b2b2d 78%, #1e2e36 90%);
	color: #fff;
}
.start {
	width: 48px;
	height: 40px;
}
.start .icon {
	display: block;
	margin: auto;
}
.bars {
	width: 4px;
	height: 16px;
	margin-left: 6px;
	border: 1px solid #56636a;
	border-width: 0 1px;
}
.desk {
	margin-left: 10px;
}
.user {
	display: flex;
	align-items: center;
	gap: 4px;
	margin: 0 10px 8px 7px;
	color: #fff;
	text-decoration: none;
}
.chev {
	font-size: 14px;
	margin: 0 7px 22px 0;
}
.task {
	width: 160px;
	height: 40px;
	margin-left: 13px;
	padding-left: 10px;
	display: flex;
	align-items: center;
	gap: 4px;
	background: #515e65;
	border-bottom: 2px solid #76b9ed;
}
.task .icon {
	width: 24px;
	height: 20px;
}
.tray {
	margin-left: auto;
	padding-right: 3px;
	display: flex;
	align-items: center;
	gap: 8px;
}
.ime {
	font-size: 16px;
}
.pin-ime {
	margin: 0 6px;
	width: 14px;
	line-height: 14px;
	text-align: center;
	background: #fff;
	color: #111;
}
.clock {
	display: flex;
	flex-direction: column;
	align-items: center;
	line-height: 19px;
	padding-right: 5px;
	border-right: 1px solid #56636a;
}
```
